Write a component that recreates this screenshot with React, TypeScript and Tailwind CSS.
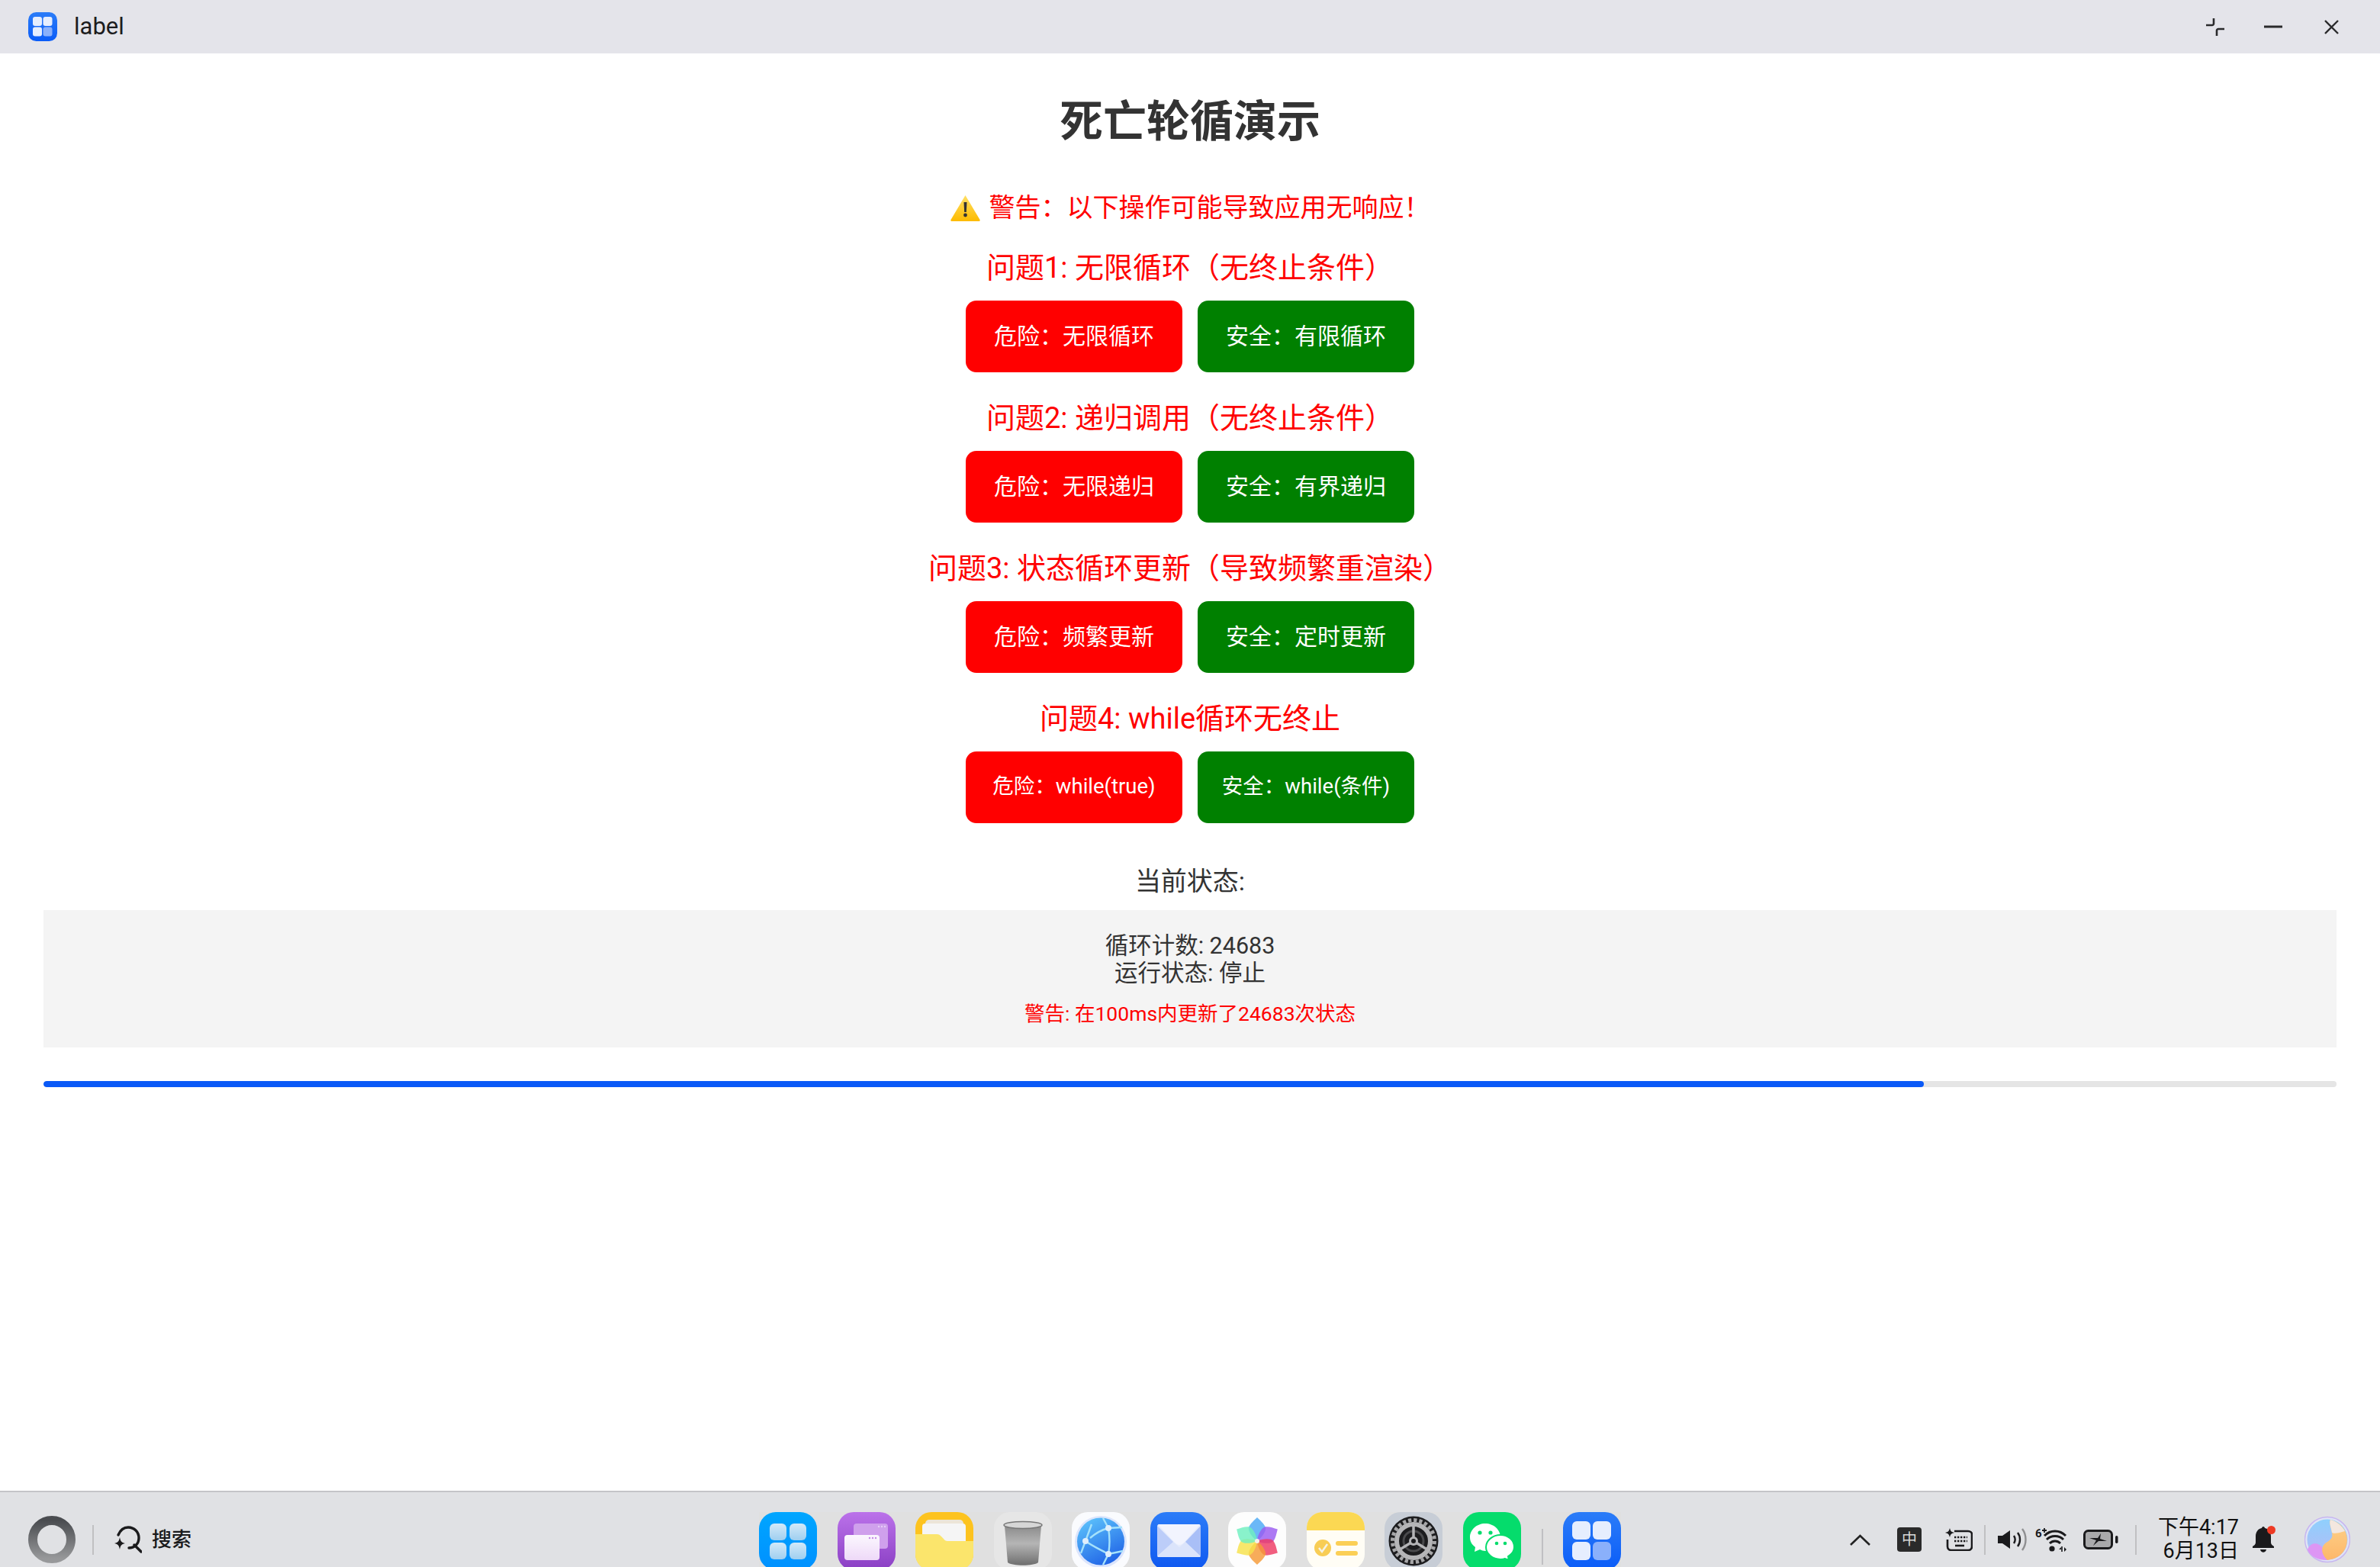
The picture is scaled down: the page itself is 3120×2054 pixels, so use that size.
import React from 'react';

const sections = [
  { title: '问题1: 无限循环（无终止条件）', danger: '危险：无限循环', safe: '安全：有限循环' },
  { title: '问题2: 递归调用（无终止条件）', danger: '危险：无限递归', safe: '安全：有界递归' },
  { title: '问题3: 状态循环更新（导致频繁重渲染）', danger: '危险：频繁更新', safe: '安全：定时更新' },
  { title: '问题4: while循环无终止', danger: '危险：while(true)', safe: '安全：while(条件)', small: true },
];

function AppGrid({ size, id }: { size: number; id: string }) {
  return (
    <svg width={size} height={size} viewBox="0 0 76 76" className="shrink-0">
      <defs>
        <linearGradient id={id} x1="0" y1="0" x2="0" y2="1">
          <stop offset="0" stopColor="#2b7cf8" />
          <stop offset="1" stopColor="#0a5cf8" />
        </linearGradient>
      </defs>
      <rect width="76" height="76" rx="21" fill={`url(#${id})`} />
      <rect x="12" y="12" width="24" height="24" rx="6" fill="#e6eefe" />
      <rect x="39" y="12" width="24" height="24" rx="6" fill="#e6eefe" />
      <rect x="12" y="39" width="24" height="24" rx="6" fill="#e6eefe" />
      <rect x="39" y="39" width="24" height="24" rx="6" fill="#8ab0fb" />
    </svg>
  );
}

function Launcher() {
  const cells = [[14, 15], [40, 15], [14, 40], [40, 40]];
  return (
    <svg width="76" height="76" viewBox="0 0 76 76" className="shrink-0">
      <defs>
        <linearGradient id="launcherBg" x1="0" y1="0" x2="0" y2="1">
          <stop offset="0" stopColor="#00a6ff" />
          <stop offset="1" stopColor="#0090ff" />
        </linearGradient>
        <linearGradient id="launcherCell" x1="0" y1="0" x2="0" y2="1">
          <stop offset="0" stopColor="#d3e9f8" />
          <stop offset="1" stopColor="#9fcff0" />
        </linearGradient>
      </defs>
      <rect width="76" height="76" rx="22" fill="url(#launcherBg)" />
      {cells.map(([x, y]) => (
        <rect key={`${x}-${y}`} x={x} y={y} width="22" height="22" rx="6" fill="url(#launcherCell)" />
      ))}
    </svg>
  );
}

function Windows() {
  return (
    <svg width="76" height="76" viewBox="0 0 76 76" className="shrink-0">
      <defs>
        <linearGradient id="winBg" x1="0" y1="0" x2="0" y2="1">
          <stop offset="0" stopColor="#bb72ea" />
          <stop offset="1" stopColor="#8a3fc4" />
        </linearGradient>
        <linearGradient id="winFront" x1="0" y1="0" x2="0" y2="1">
          <stop offset="0" stopColor="#fbf7fe" />
          <stop offset="1" stopColor="#eed9f8" />
        </linearGradient>
      </defs>
      <rect width="76" height="76" rx="21" fill="url(#winBg)" />
      <rect x="21" y="15" width="45" height="33" rx="4" fill="#cfa0ec" />
      <circle cx="54" cy="19" r="1.2" fill="#e6cdf6" />
      <circle cx="58" cy="19" r="1.2" fill="#e6cdf6" />
      <circle cx="62" cy="19" r="1.2" fill="#e6cdf6" />
      <rect x="9" y="30" width="46" height="33" rx="4" fill="url(#winFront)" />
      <circle cx="42" cy="34" r="1.2" fill="#c58ae6" />
      <circle cx="46" cy="34" r="1.2" fill="#c58ae6" />
      <circle cx="50" cy="34" r="1.2" fill="#c58ae6" />
    </svg>
  );
}

function Folder() {
  return (
    <svg width="76" height="76" viewBox="0 0 76 76" className="shrink-0">
      <rect width="76" height="76" rx="21" fill="#fdc31f" />
      <rect x="13" y="10" width="50" height="30" rx="5" fill="#ece5d8" />
      <rect x="9" y="15" width="57" height="34" rx="4" fill="#f5f5f5" />
      <path d="M0 29H28C31 29 32 30 34 32L37 35C38 37 40 38 42 38H76V55C76 67 67 76 55 76H21C9 76 0 67 0 55Z" fill="#fbe56c" />
    </svg>
  );
}

function Trash() {
  return (
    <svg width="76" height="76" viewBox="0 0 76 76" className="shrink-0">
      <defs>
        <linearGradient id="binBody" x1="0" y1="0" x2="0" y2="1">
          <stop offset="0" stopColor="#8b8b8b" />
          <stop offset="0.45" stopColor="#b5b5b5" />
          <stop offset="1" stopColor="#6e6e6e" />
        </linearGradient>
      </defs>
      <rect width="76" height="76" rx="21" fill="#e6e6e6" />
      <path d="M14 18L18 66C24 71 52 71 58 66L62 18Z" fill="url(#binBody)" />
      <ellipse cx="38" cy="17" rx="25" ry="4.5" fill="#d6d6d6" stroke="#777" strokeWidth="1.5" />
    </svg>
  );
}

function Browser() {
  return (
    <svg width="76" height="76" viewBox="0 0 76 76" className="shrink-0">
      <defs>
        <linearGradient id="globe" x1="0.2" y1="0" x2="0.7" y2="1">
          <stop offset="0" stopColor="#5cc2fb" />
          <stop offset="1" stopColor="#1f62e6" />
        </linearGradient>
      </defs>
      <rect width="76" height="76" rx="21" fill="#fafbfe" />
      <circle cx="38" cy="39" r="34" fill="#cfdcfb" opacity="0.7" />
      <circle cx="38" cy="38.5" r="31" fill="url(#globe)" />
      <g stroke="#a5e2fb" strokeWidth="2.4" fill="none">
        <path d="M24 34C31 28 40 23 48 21" />
        <path d="M18 38C26 44 37 49 48 55" />
        <path d="M48 21C50 33 50 44 48 55L41 69" />
        <path d="M48 21L66 20M48 55L67 51M18 38L12 54M18 38L26 16M48 21L41 8" />
      </g>
      <circle cx="48" cy="21" r="4" fill="#dfeefc" />
      <circle cx="18" cy="38" r="4" fill="#dfeefc" />
      <circle cx="48" cy="55" r="4" fill="#dfeefc" />
    </svg>
  );
}

function Mail() {
  return (
    <svg width="76" height="76" viewBox="0 0 76 76" className="shrink-0">
      <defs>
        <linearGradient id="mailBg" x1="0" y1="0" x2="0" y2="1">
          <stop offset="0" stopColor="#2b7cf8" />
          <stop offset="1" stopColor="#0f58f0" />
        </linearGradient>
      </defs>
      <rect width="76" height="76" rx="21" fill="url(#mailBg)" />
      <rect x="9" y="16" width="57" height="43" rx="3" fill="#e6ecfc" />
      <path d="M9 59L30 39L38 46L46 39L66 59Z" fill="#dbe4fb" />
      <path d="M66 18V58L46 39Z" fill="#a9bff7" />
      <path d="M9 18V58L30 39Z" fill="#bccdf9" />
      <path d="M10 16H65L44 40C40 44 36 44 32 40Z" fill="#f2f4fe" />
    </svg>
  );
}

function Photos() {
  const petals = [
    { a: 0, c: '#4aa8f5' },
    { a: 60, c: '#9a5cf0' },
    { a: 120, c: '#ee3a63' },
    { a: 180, c: '#f59a36' },
    { a: 240, c: '#f7e24a' },
    { a: 300, c: '#6fefc0' },
  ];
  return (
    <svg width="76" height="76" viewBox="0 0 76 76" className="shrink-0">
      <rect width="76" height="76" rx="21" fill="#fdfdfd" />
      {petals.map((p) => (
        <path
          key={p.a}
          d="M38 38C30 32 26 24 27 20C29 15 34 11 38 7C42 11 47 15 49 20C50 24 46 32 38 38Z"
          fill={p.c}
          opacity="0.82"
          transform={`rotate(${p.a} 38 38)`}
        />
      ))}
      <circle cx="38" cy="38" r="3" fill="#f5f0ea" />
    </svg>
  );
}

function Notes() {
  return (
    <svg width="76" height="76" viewBox="0 0 76 76" className="shrink-0">
      <rect width="76" height="76" rx="21" fill="#fffdf5" />
      <path d="M0 24V21C0 9 9 0 21 0H55C67 0 76 9 76 21V24Z" fill="#fbd853" />
      <circle cx="21" cy="47" r="11" fill="#f8cd55" />
      <path d="M16 47L20 52L27 42" stroke="#f5f2e6" strokeWidth="2.5" fill="none" />
      <rect x="38" y="38" width="29" height="6" rx="3" fill="#fbcf56" />
      <rect x="38" y="51" width="29" height="6" rx="3" fill="#fbcf56" />
    </svg>
  );
}

function SettingsGear() {
  return (
    <svg width="76" height="76" viewBox="0 0 76 76" className="shrink-0">
      <rect width="76" height="76" rx="21" fill="#c7cdd6" />
      <circle cx="38" cy="38" r="32.5" fill="#1d1d1f" />
      <circle cx="38" cy="38" r="27.5" fill="none" stroke="#a6a6a8" strokeWidth="5" strokeDasharray="4.2 3" />
      <circle cx="38" cy="38" r="22" fill="none" stroke="#b5b5b7" strokeWidth="6" />
      <circle cx="38" cy="38" r="13" fill="none" stroke="#4a4a4c" strokeWidth="3" />
      <g stroke="#b5b5b7" strokeWidth="3.5">
        <path d="M38 38V14" />
        <path d="M38 38L17 51" />
        <path d="M38 38L59 51" />
      </g>
      <circle cx="38" cy="38" r="6" fill="#b5b5b7" />
      <circle cx="38" cy="38" r="3" fill="#1d1d1f" />
    </svg>
  );
}

function WeChat() {
  return (
    <svg width="76" height="76" viewBox="0 0 76 76" className="shrink-0">
      <rect width="76" height="76" rx="21" fill="#05dc6c" />
      <path d="M29 15C18 15 9 23 9 33C9 39 12 43 16 46L15 52L22 49C24 50 27 51 29 51C40 51 49 43 49 33C49 23 40 15 29 15Z" fill="#fff" />
      <circle cx="22" cy="27" r="2.6" fill="#05dc6c" />
      <circle cx="36" cy="27" r="2.6" fill="#05dc6c" />
      <path d="M49 30C39 30 30 37 30 46C30 55 39 62 49 62C51 62 53 62 55 61L60 63L59 58C64 55 67 51 67 46C67 37 59 30 49 30Z" fill="#fff" stroke="#05dc6c" strokeWidth="2" />
      <circle cx="44" cy="41" r="2.3" fill="#05dc6c" />
      <circle cx="55" cy="41" r="2.3" fill="#05dc6c" />
    </svg>
  );
}

function WarningEmoji() {
  return (
    <svg width="39" height="35" viewBox="0 0 39 35" className="shrink-0">
      <defs>
        <linearGradient id="warnFill" x1="0" y1="0" x2="0" y2="1">
          <stop offset="0" stopColor="#ffe066" />
          <stop offset="1" stopColor="#fdbb00" />
        </linearGradient>
      </defs>
      <path d="M19.5 1L38.5 33C39 34 38.5 35 37 35H2C.5 35 0 34 .5 33Z" fill="url(#warnFill)" />
      <path d="M17.5 10H21.5L20.8 23H18.2Z" fill="#333" />
      <circle cx="19.5" cy="27" r="2.4" fill="#333" />
    </svg>
  );
}

function TrayDivider({ className }: { className: string }) {
  return <div className={`w-[2px] h-[39px] bg-[#c0c0c2] shrink-0 ${className}`} />;
}

export default function App() {
  return (
    <div className="h-[2054px] w-[3120px] overflow-hidden flex flex-col bg-white font-['Roboto','Noto_Sans_CJK_SC',sans-serif]">
      {/* Title bar */}
      <div className="h-[70px] shrink-0 bg-[#e4e4ea] flex items-center pl-[37px]">
        <AppGrid size={38} id="titleIcon" />
        <span className="ml-[22px] text-[31px] text-[#1c1c1e]">label</span>
        <div className="ml-auto flex items-center pr-[54px]">
          <svg width="24" height="24" viewBox="0 0 24 24" fill="none" stroke="#2a2a2c" strokeWidth="2.6">
            <path d="M10 1V8C10 9 9 10 8 10H0" />
            <path d="M24 15H16C15 15 14 16 14 17V24" />
          </svg>
          <svg className="ml-[52px]" width="24" height="4" viewBox="0 0 24 4">
            <rect width="24" height="3" y="0.5" fill="#2a2a2c" />
          </svg>
          <svg className="ml-[55px]" width="19" height="19" viewBox="0 0 19 19" stroke="#2a2a2c" strokeWidth="2.4">
            <path d="M1 1L18 18M18 1L1 18" />
          </svg>
        </div>
      </div>

      {/* Content */}
      <div className="flex-1 px-[57px] flex flex-col items-center">
        <h1 className="mt-[48px] text-[57px] leading-[84px] font-bold text-[#333]">死亡轮循演示</h1>

        <div className="mt-[46px] flex items-center h-[48px] text-[34px] text-[#ff0000]">
          <WarningEmoji />
          <span className="ml-[12px]">警告：以下操作可能导致应用无响应！</span>
        </div>

        {sections.map((s, i) => (
          <div key={s.title} className={`flex flex-col items-center ${i === 0 ? 'mt-[28px]' : 'mt-[33px]'}`}>
            <h3 className="text-[38px] leading-[54px] text-[#ff0000]">{s.title}</h3>
            <div className="mt-[16px] flex gap-[20px]">
              <button className={`w-[284px] h-[94px] pb-[2px] rounded-[14px] bg-[#ff0000] text-white ${s.small ? 'text-[27.5px] pb-0' : 'text-[30px]'}`}>
                {s.danger}
              </button>
              <button className={`w-[284px] h-[94px] pb-[2px] rounded-[14px] bg-[#008000] text-white ${s.small ? 'text-[27.5px] pb-0' : 'text-[30px]'}`}>
                {s.safe}
              </button>
            </div>
          </div>
        ))}

        <div className="mt-[51px] text-[34px] leading-[50px] text-[#333]">当前状态:</div>

        <div className="mt-[13px] w-full h-[180px] bg-[#f4f4f4] flex flex-col items-center pt-[29px] text-[#333]">
          <div className="text-[30.5px] leading-[36px]">循环计数: 24683</div>
          <div className="text-[30.5px] leading-[36px]">运行状态: 停止</div>
          <div className="mt-[16px] text-[26.5px] leading-[38px] text-[#ff0000]">警告: 在100ms内更新了24683次状态</div>
        </div>

        <div className="mt-[44px] w-full h-[8px] rounded-full bg-[#e5e5e5] overflow-hidden">
          <div className="h-full w-[82%] rounded-full bg-[#0a59f7]" />
        </div>
      </div>

      {/* Taskbar */}
      <div className="h-[100px] shrink-0 border-t-2 border-[#c4c4c8] bg-[#e0e1e4] pt-[26px] grid grid-cols-[1fr_auto_1fr]">
        <div className="h-[72px] flex items-center pl-[37px]">
          <svg width="62" height="62" viewBox="0 0 62 62">
            <defs>
              <linearGradient id="ring" x1="0" y1="0" x2="0" y2="1">
                <stop offset="0" stopColor="#4a4c50" />
                <stop offset="1" stopColor="#97989a" />
              </linearGradient>
            </defs>
            <circle cx="31" cy="31" r="25" fill="none" stroke="url(#ring)" strokeWidth="12" />
          </svg>
          <div className="ml-[22px] w-[2px] h-[39px] bg-[#c0c0c2]" />
          <svg className="ml-[27px]" width="36" height="36" viewBox="0 0 36 36" fill="none">
            <path d="M5 12C8 5 13 2 18 2C26 2 32 8 32 16C32 24 26 29 19 29" stroke="#1a1a1c" strokeWidth="3.4" strokeLinecap="round" />
            <path d="M26 25L35 34" stroke="#1a1a1c" strokeWidth="3.4" strokeLinecap="round" />
            <path d="M7 15C8 20 9 22 14 23C9 24 8 26 7 31C6 26 5 24 0 23C5 22 6 20 7 15Z" fill="#1a1a1c" />
          </svg>
          <span className="ml-[13px] text-[26px] font-medium text-[#1a1a1c]">搜索</span>
        </div>

        <div className="flex items-start h-[76px] bg-[#e0e0e0]">
          <div className="flex gap-[26.5px]">
            <Launcher />
            <Windows />
            <Folder />
            <Trash />
            <Browser />
            <Mail />
            <Photos />
            <Notes />
            <SettingsGear />
            <WeChat />
          </div>
          <div className="ml-[27px] mt-[22px] w-[2px] h-[47px] bg-[#c0c0c2]" />
          <div className="ml-[26px]">
            <AppGrid size={76} id="dockIcon" />
          </div>
        </div>

        <div className="h-[72px] flex items-center justify-end pr-[39px]">
          <svg width="27" height="15" viewBox="0 0 27 15" fill="none" stroke="#222" strokeWidth="2.6">
            <path d="M1 14L13.5 2L26 14" />
          </svg>
          <div className="ml-[35px] w-[32px] h-[32px] rounded-[4px] bg-[#2a2a2a] flex items-center justify-center text-[20px] text-[#d8d8d8]">中</div>
          <svg className="ml-[31px]" width="36" height="30" viewBox="0 0 36 30" fill="none">
            <path d="M12 4H30C33 4 35 6 35 8V24C35 27 33 29 30 29H8C5 29 3 27 3 24V15" stroke="#1a1a1c" strokeWidth="2.6" />
            <path d="M6 0C7 4 8 5 12 6C8 7 7 8 6 12C5 8 4 7 0 6C4 5 5 4 6 0Z" fill="#1a1a1c" />
            <path d="M12 12H29M12 17H29" stroke="#1a1a1c" strokeWidth="2.4" strokeDasharray="2.4 1.6" />
            <path d="M13 23H25" stroke="#1a1a1c" strokeWidth="2.6" />
          </svg>
          <TrayDivider className="ml-[15px]" />
          <svg className="ml-[16px]" width="39" height="30" viewBox="0 0 39 30" fill="none">
            <path d="M0 10H6L16 3V27L6 20H0Z" fill="#1a1a1c" />
            <path d="M21 10C23 13 23 17 21 20" stroke="#1a1a1c" strokeWidth="2.4" />
            <path d="M26 6C30 11 30 19 26 24" stroke="#1a1a1c" strokeWidth="2.4" />
            <path d="M32 1C38 9 38 21 32 29" stroke="#8f8f91" strokeWidth="2.4" />
          </svg>
          <svg className="ml-[10px]" width="46" height="32" viewBox="0 0 46 32" fill="none">
            <path d="M12 11C20 3 32 3 40 11" stroke="#1a1a1c" strokeWidth="3" />
            <path d="M15 16C21 10 31 10 37 16" stroke="#1a1a1c" strokeWidth="3" />
            <path d="M19 21C23 17 29 17 33 21" stroke="#1a1a1c" strokeWidth="3" />
            <circle cx="22" cy="28" r="3.6" fill="#1a1a1c" />
            <path d="M34 26L31 29H34ZM38 32V26L41 29Z" fill="#1a1a1c" />
            <path d="M35 25V32" stroke="#1a1a1c" strokeWidth="1.6" />
            <text x="0" y="13" fontSize="15" fontWeight="700" fill="#1a1a1c">6</text>
            <path d="M9 4H15M12 1V7" stroke="#1a1a1c" strokeWidth="1.8" />
          </svg>
          <svg className="ml-[17px]" width="46" height="26" viewBox="0 0 46 26" fill="none">
            <rect x="1.5" y="1.5" width="36" height="23" rx="5" fill="#a9a9ab" stroke="#1a1a1c" strokeWidth="3" />
            <rect x="42" y="8" width="3.5" height="10" rx="1.7" fill="#1a1a1c" />
            <path d="M23 5L19 11H8L17 14L13 21L20 15H31L22 12Z" fill="#1a1a1c" />
          </svg>
          <TrayDivider className="ml-[22px]" />
          <div className="ml-[28px] w-[106px] shrink-0 whitespace-nowrap flex flex-col items-end text-[27px] leading-[31px] text-[#111]">
            <span>下午4:17</span>
            <span>6月13日</span>
          </div>
          <svg className="ml-[18px] shrink-0" width="30" height="36" viewBox="0 0 30 36">
            <path d="M14 1C15 1 16 2 16 3C21 4 24 8 24 14V22C24 24 26 26 28 27V29H0V27C2 26 4 24 4 22V14C4 8 7 4 12 3C12 2 13 1 14 1Z" fill="#1a1a1c" />
            <path d="M10 31H18C17 36 11 36 10 31Z" fill="#1a1a1c" />
            <circle cx="24.5" cy="5.5" r="5.5" fill="#ee3a24" />
          </svg>
          <svg className="ml-[38px] shrink-0" width="60" height="62" viewBox="0 0 60 62">
            <defs>
              <linearGradient id="orbBlue" x1="0" y1="0" x2="0" y2="1">
                <stop offset="0" stopColor="#8fd0fd" />
                <stop offset="1" stopColor="#b7b9f5" />
              </linearGradient>
              <linearGradient id="orbOrange" x1="0" y1="0" x2="0" y2="1">
                <stop offset="0" stopColor="#fdd28a" />
                <stop offset="1" stopColor="#fdb76a" />
              </linearGradient>
            </defs>
            <circle cx="30" cy="31" r="29.5" fill="#dfe4f6" stroke="#c7b6f0" strokeWidth="1.5" />
            <circle cx="30" cy="31" r="26.5" fill="url(#orbBlue)" />
            <path d="M4 44C8 34 18 34 24 42C28 48 30 55 30 58C18 58 8 54 4 44Z" fill="#dd96f4" />
            <path d="M34 5C46 8 56 18 56 31C56 46 46 56 30 58C22 50 21 42 27 36C33 32 38 30 36 22C35 15 32 10 34 5Z" fill="url(#orbOrange)" />
            <path d="M34 5C42 7 50 14 53 20C46 22 40 24 36 22C35 15 32 10 34 5Z" fill="#f3e7df" />
          </svg>
        </div>
      </div>
    </div>
  );
}
